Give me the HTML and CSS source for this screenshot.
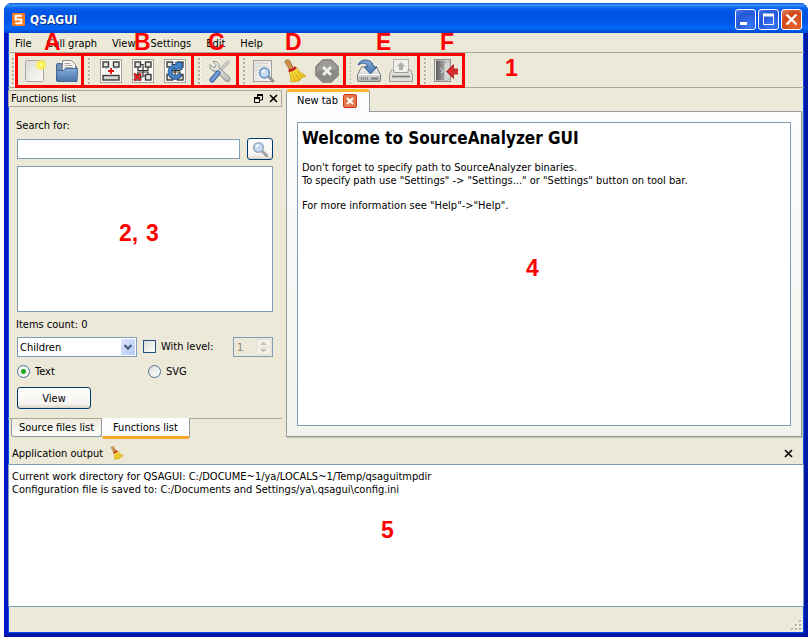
FILE: index.html
```html
<!DOCTYPE html>
<html lang="en">
<head>
<meta charset="utf-8">
<title>QSAGUI</title>
<link rel="stylesheet" href="styles.css">
</head>
<body>
<svg class="defs" aria-hidden="true">
  <defs>
    <linearGradient id="gold" x1="0" y1="0" x2="1" y2="1"><stop offset="0" stop-color="#ffec50"/><stop offset="1" stop-color="#e8b818"/></linearGradient>
    <linearGradient id="steel" x1="0" y1="0" x2="0" y2="1"><stop offset="0" stop-color="#fafafa"/><stop offset="1" stop-color="#b4b6b4"/></linearGradient>
    <linearGradient id="blue" x1="0" y1="0" x2="0" y2="1"><stop offset="0" stop-color="#86aad6"/><stop offset="1" stop-color="#4876ae"/></linearGradient>
    <linearGradient id="page" x1="0" y1="0" x2="1" y2="1"><stop offset="0" stop-color="#dededa"/><stop offset="1" stop-color="#fbfbf9"/></linearGradient>
    <linearGradient id="door" x1="0" y1="0" x2="1" y2="0"><stop offset="0" stop-color="#5c5c5c"/><stop offset="1" stop-color="#c4c4c4"/></linearGradient>
    <radialGradient id="glow"><stop offset="0" stop-color="#ffffb0"/><stop offset=".5" stop-color="#fff23c"/><stop offset="1" stop-color="#ffee30" stop-opacity="0"/></radialGradient>
    <symbol id="broom" viewBox="0 0 24 24">
      <path d="M2.500 1.500q2-1.500 4 0l4 8-3.500 1.500-4.500-7q-1-1.500 0-2.500z" fill="#d09448" stroke="#96602a" stroke-width=".8"/>
      <path d="M6 12l7-4 2 3q3 3 8 6l-4 1.500-3 3.500-3 .5-5 .5q0-6-2-11z" fill="url(#gold)" stroke="#c89810" stroke-width=".7"/>
      <path d="M5.500 11.500q5 0 7-3.500" fill="none" stroke="#c82020" stroke-width="2.600"/>
      <path d="M9 14l3 8M11.500 13l5 8M14 12l5 6" fill="none" stroke="#c89810" stroke-width=".7"/>
    </symbol>
    <symbol id="graph" viewBox="0 0 24 24">
      <rect x="1.500" y=".5" width="21" height="23" fill="#fafaf6" stroke="#a4a49c"/>
      <g fill="#e4e4e0" stroke="#3c3c3c" stroke-width="1.400"><rect x="4" y="3" width="5.500" height="5"/><rect x="14.500" y="3" width="5.500" height="5"/></g>
    </symbol>
    <symbol id="graph4" viewBox="0 0 24 24">
      <use href="#graph"/>
      <path d="M7 8v3.500h10V8M9.500 5.500H12V17h2M7 16v-3h10v3M9.500 18H12" fill="none" stroke="#303030" stroke-width="1.200"/>
      <g fill="#e4e4e0" stroke="#3c3c3c" stroke-width="1.400"><rect x="4" y="15.500" width="5.500" height="5.500"/><rect x="14.500" y="15.500" width="5.500" height="5.500"/></g>
    </symbol>
  </defs>
</svg>

<div class="window">
  <header class="titlebar">
    <svg class="app-logo" viewBox="0 0 14 14" aria-hidden="true"><rect width="14" height="14" rx="1" fill="#f47a20"/><path d="M10.500 3H4v4h6v4H3.500" fill="none" stroke="#fff" stroke-width="2.200"/></svg>
    <h1>QSAGUI</h1>
    <div class="window-buttons">
      <button class="win-button" aria-label="Minimize"><svg viewBox="0 0 21 21"><path d="M5 14.500h7" stroke="#fff" stroke-width="3"/></svg></button>
      <button class="win-button" aria-label="Maximize"><svg viewBox="0 0 21 21"><path d="M5.500 6v9.500h10V6" fill="none" stroke="#fff"/><path d="M5 6h11" stroke="#fff" stroke-width="3"/></svg></button>
      <button class="win-button close" aria-label="Close"><svg viewBox="0 0 21 21"><path d="M5.500 5.500l10 10M15.500 5.500l-10 10" stroke="#fff" stroke-width="2.400"/></svg></button>
    </div>
  </header>

  <nav class="menubar">
    <a href="#">File</a><a href="#">Call graph</a><a href="#">View</a><a href="#">Settings</a><a href="#">Edit</a><a href="#">Help</a>
  </nav>

  <div class="toolbar">
    <span class="handle"></span>
    <div class="groups">
      <div class="group first">
        <button aria-label="New"><svg viewBox="0 0 24 24"><rect x="2.500" y="1.500" width="18" height="21" rx="1" fill="url(#page)" stroke="#a8a8a4"/><path d="M5 3v18" stroke="#c8c8c4" stroke-dasharray="1 3"/><circle cx="18" cy="6" r="6" fill="url(#glow)"/></svg></button>
        <button aria-label="Open"><svg viewBox="0 0 24 24"><path d="M1.500 22V5.500q0-1 1-1h4l1 3h14V15z" fill="#7292b8" stroke="#46658e"/><path d="M7.500 12V1.500h9l4 4V12z" fill="#f4f4f2" stroke="#8c8c8a"/><path d="M9.500 4.500h6M9.500 6.500h8M9.500 8.500h8" stroke="#a8a8a8"/><path d="M2.500 22.500l-1-11h7l2-2h12l-.5 13z" fill="url(#blue)" stroke="#44689a"/></svg></button>
      </div>
      <div class="group">
        <span class="handle"></span>
        <button aria-label="Add graph"><svg viewBox="0 0 24 24"><use href="#graph"/><path d="M9 12h6M12 9v6" stroke="#e01010" stroke-width="1.800"/><path d="M7 8.500v1.500M17 8.500v1.500" stroke="#888"/><rect x="4" y="16.500" width="16" height="4.500" fill="#d4d4d0" stroke="#3c3c3c" stroke-width="1.400"/></svg></button>
        <button aria-label="Remove graph"><svg viewBox="0 0 24 24"><use href="#graph4"/><path d="M3 14.500l7 7M10 14.500l-7 7" stroke="#e01818" stroke-width="2.200"/></svg></button>
        <button aria-label="Refresh graph"><svg viewBox="0 0 24 24"><use href="#graph4"/><path d="M13 7.500A5.500 5.500 0 1 0 17.500 15" fill="none" stroke="#1c4a86" stroke-width="4.600"/><path d="M12 3.500h7v7.500l-2.500-2-3 2.500-2.500-3 3-2.500z" fill="#4484cc" stroke="#1c4a86" stroke-width=".8"/><path d="M14 7.500A5.500 5.500 0 1 0 17 15.500" fill="none" stroke="#4484cc" stroke-width="3"/></svg></button>
      </div>
      <div class="group">
        <span class="handle"></span>
        <button aria-label="Settings"><svg viewBox="0 0 24 24"><path d="M21 2L11 13" stroke="#8c908e" stroke-width="3"/><path d="M21 2L11 13" stroke="#e8eae8" stroke-width="1.400"/><path d="M5 2.500l3 3-.5 2.500-2.500.5-3-3q-1 4 2 6 2 1 4 .5l9 9.500q2 2 4 .5t.5-4L11 9q1-4-2-6-2-1-4-.5z" fill="url(#steel)" stroke="#828684" stroke-width=".9"/><path d="M10 14l-6 7" stroke="#345e98" stroke-width="5" stroke-linecap="round"/><path d="M10 14l-6 7" stroke="#6f9cd4" stroke-width="3.200" stroke-linecap="round"/></svg></button>
      </div>
      <div class="group">
        <span class="handle"></span>
        <button aria-label="Preview"><svg viewBox="0 0 24 24"><rect x="2.500" y="1.500" width="18" height="21" fill="url(#page)" stroke="#a0a09c"/><path d="M5 3v18" stroke="#b8b8b4" stroke-dasharray="1 3"/><path d="M7 4.500h11M7 7.500h11M7 10.500h11M7 13.500h11" stroke="#d4d4d0"/><path d="M18 18l4 4" stroke="#949494" stroke-width="3" stroke-linecap="round"/><circle cx="13.500" cy="14" r="4.800" fill="#c8dcf4" stroke="#6c94c4" stroke-width="1.700"/><path d="M11 13.500q1-2 3-2" fill="none" stroke="#fff" stroke-width="1.400"/></svg></button>
        <button aria-label="Clear"><svg viewBox="0 0 24 24"><use href="#broom"/></svg></button>
        <button aria-label="Stop"><svg viewBox="0 0 24 24"><path d="M7.500 .5h9l7 7v9l-7 7h-9l-7-7v-9z" fill="#8a8a84" stroke="#96968f"/><path d="M8 2h8l6 6v3q-10-1-20 2V8z" fill="#9c9c96"/><path d="M8 8l8 8M16 8l-8 8" stroke="#efefe9" stroke-width="3"/></svg></button>
      </div>
      <div class="group">
        <span class="handle"></span>
        <button aria-label="Save"><svg viewBox="0 0 24 24"><path d="M.500 16l4-8h15l4 8v5q0 1.500-1.500 1.500H2Q.5 22.500.5 21z" fill="url(#steel)" stroke="#777b78"/><path d="M1.500 15.500h21" stroke="#fff"/><path d="M4.500 18v3M6.500 18v3M8.500 18v3M10.500 18v3" stroke="#888"/><path d="M14 19.500h7" stroke="#777" stroke-width="2"/><path d="M1 6q2-5 7-5 8 0 8.500 7H20l-6.500 7L7 8h3.500q-.5-4-3.500-4-3 0-6 2z" fill="url(#blue)" stroke="#2c568c" stroke-width=".9"/></svg></button>
        <button aria-label="Print"><svg viewBox="0 0 24 24"><rect x="4.500" y=".5" width="15" height="14" fill="#f0f0ec" stroke="#b0b0ac"/><path d="M12 3l4.500 4.500H14V11h-4V7.500H7.500z" fill="#b0b0ac"/><path d="M1.500 13q0-2 2-2H5v2.500h14V11h1.500q2 0 2 2l1 3v6.500H.5V16z" fill="#e0e0dc" stroke="#9c9c98"/><path d="M3 17.500h18" stroke="#80807c" stroke-width="1.800"/></svg></button>
      </div>
      <div class="group">
        <span class="handle"></span>
        <button aria-label="Exit"><svg viewBox="0 0 24 24"><rect x=".5" y=".5" width="16" height="22" fill="#eeeeec" stroke="#8a8a88"/><path d="M2 1.500v20h8V5l4-3.500z" fill="url(#door)"/><path d="M10 22.500l6-2v-19L10 5z" fill="#d6d6d4" stroke="#9a9a98" stroke-width=".6"/><path d="M6 9l3 3-2 2" fill="none" stroke="#ddd"/><path d="M12.500 12.500l7-7v4.500h5v5h-5v4.500z" fill="#d42c30" stroke="#a81c20" stroke-width=".8"/></svg></button>
      </div>
    </div>
  </div>

  <main class="workspace">
    <aside class="dock">
      <div class="dock-title">
        <h2>Functions list</h2>
        <button class="plain" aria-label="Float"><svg viewBox="0 0 9 9"><path d="M3 1h6M3.500 1v2M8.500 1v5H6" fill="none" stroke="#000"/><path d="M3 1h6" stroke="#000" stroke-width="2"/><path d="M.500 4v4.500h5V4" fill="none" stroke="#000"/><path d="M0 4h6" stroke="#000" stroke-width="2"/></svg></button>
        <button class="plain" aria-label="Close functions list"><svg viewBox="0 0 9 9"><path d="M1 1l7 7M8 1L1 8" stroke="#000" stroke-width="1.600"/></svg></button>
      </div>
      <form class="dock-body">
        <label for="search">Search for:</label>
        <div class="search-row">
          <input id="search" class="field" type="text">
          <button type="button" class="xp-button find" aria-label="Search"><svg viewBox="0 0 16 16"><path d="M10 10l4.500 4.500" stroke="#a2a2a2" stroke-width="3" stroke-linecap="round"/><circle cx="6.500" cy="6.500" r="4.800" fill="#c4daf2" stroke="#9aacc4" stroke-width="1.600"/><path d="M4 6q1-2 3-2" fill="none" stroke="#fff" stroke-width="1.400"/></svg></button>
        </div>
        <div class="field results"></div>
        <p>Items count: 0</p>
        <div class="options-row">
          <span class="select-box">
            <select class="field" aria-label="Relation"><option>Children</option></select>
            <svg class="drop" viewBox="0 0 14 16" aria-hidden="true"><path d="M3.500 6l3.500 3.500L10.500 6" fill="none" stroke="#4d6185" stroke-width="2.400"/></svg>
          </span>
          <label class="choice"><input type="checkbox">With level:</label>
          <span class="spin">
            <input type="text" aria-label="Level" value="1" disabled>
            <svg viewBox="0 0 15 16" aria-hidden="true"><rect x=".5" y=".5" width="14" height="15" rx="1" fill="#f3f2ea" stroke="#e2e0d2"/><path d="M0 8h15" stroke="#e2e0d2"/><path d="M4 6l3.500-3.500L11 6zM4 10l3.500 3.500L11 10z" fill="#c4c2b4"/></svg>
          </span>
        </div>
        <div class="radio-row">
          <label class="choice"><input type="radio" name="format" checked>Text</label>
          <label class="choice"><input type="radio" name="format">SVG</label>
        </div>
        <button type="button" class="xp-button view">View</button>
      </form>
      <div class="dock-tabs">
        <button class="dock-tab">Source files list</button>
        <button class="dock-tab active">Functions list</button>
      </div>
    </aside>

    <section class="editor">
      <div class="editor-tab">New tab
        <button class="tab-close" aria-label="Close tab"><svg viewBox="0 0 12 12"><path d="M3 3l6 6M9 3L3 9" stroke="#fff" stroke-width="2"/></svg></button>
      </div>
      <div class="editor-pane">
        <article class="page">
          <h2>Welcome to SourceAnalyzer GUI</h2>
          <p>Don't forget to specify path to SourceAnalyzer binaries.<br>To specify path use "Settings" -&gt; "Settings..." or "Settings" button on tool bar.</p>
          <p>For more information see "Help"-&gt;"Help".</p>
        </article>
      </div>
    </section>
  </main>

  <section class="output">
    <div class="output-title">
      <h2>Application output</h2>
      <button class="plain clear" aria-label="Clear output"><svg viewBox="0 0 24 24"><use href="#broom"/></svg></button>
      <button class="plain end" aria-label="Close output"><svg viewBox="0 0 9 9"><path d="M1 1l7 7M8 1L1 8" stroke="#000" stroke-width="1.600"/></svg></button>
    </div>
    <div class="log">
      <p>Current work directory for QSAGUI: C:/DOCUME~1/ya/LOCALS~1/Temp/qsaguitmpdir</p>
      <p>Configuration file is saved to: C:/Documents and Settings/ya\.qsagui\config.ini</p>
    </div>
  </section>

  <footer class="statusbar">
    <svg viewBox="0 0 12 12" aria-hidden="true"><path d="M9 1h2v2H9zM5 5h2v2H5zM9 5h2v2H9zM1 9h2v2H1zM5 9h2v2H5zM9 9h2v2H9z" fill="#fff"/><path d="M8 0h2v2H8zM4 4h2v2H4zM8 4h2v2H8zM0 8h2v2H0zM4 8h2v2H4zM8 8h2v2H8z" fill="#b8b4a2"/></svg>
  </footer>

  <span class="callout a">A</span><span class="callout b">B</span><span class="callout c">C</span><span class="callout d">D</span><span class="callout e">E</span><span class="callout f">F</span>
  <span class="callout n1">1</span><span class="callout n2">2,</span><span class="callout n3">3</span><span class="callout n4">4</span><span class="callout n5">5</span>
</div>
</body>
</html>
```
FILE: styles.css
```css
* { box-sizing: border-box; }

body {
  margin: 0;
  padding: 3px 3px 3px 4px;
  background: #fff;
  color: #000;
  font: 11px/13px "DejaVu Sans Condensed", "Noto Sans", sans-serif;
}

h1, h2, p { margin: 0; font-size: 11px; font-weight: normal; }
a { color: inherit; text-decoration: none; }
button, input, select { font: inherit; color: inherit; margin: 0; padding: 0; }
button { border: 0; background: none; }
svg { display: block; }
.defs { position: absolute; width: 0; height: 0; }

.window {
  position: relative;
  display: flex;
  flex-direction: column;
  min-height: calc(100vh - 6px);
  border: 4px solid #0831d9;
  border-top: 0;
  border-color: #0842e0 #0018a8 #0018a8 #0018c8;
  border-radius: 8px 8px 0 0;
  background: #ece9d8;
  box-shadow: inset 0 0 0 1px #0050e8;
}

/* Title bar */
.titlebar {
  display: flex;
  align-items: center;
  height: 30px;
  margin: 0 -4px;
  padding: 3px 6px 0 8px;
  border-radius: 8px 8px 0 0;
  background: linear-gradient(#0a4fd0, #3c96ff 2px, #0a62ee 5px, #0054e3 10px, #0055e5 18px, #0266fa 25px, #0048cc 30px);
}
.app-logo { width: 13px; height: 13px; }
.titlebar h1 {
  margin-left: 5px;
  color: #fff;
  font: bold 12px/16px "DejaVu Sans Condensed", sans-serif;
  text-shadow: 1px 1px #0a2a80;
}
.window-buttons { display: flex; gap: 2px; margin-left: auto; }
.win-button {
  width: 21px;
  height: 21px;
  border: 1px solid #fff;
  border-radius: 3px;
  background: radial-gradient(circle at 70% 80%, #3a78f4, #2458d8 60%, #4a78e4);
}
.win-button svg { width: 21px; height: 21px; margin: -1px; }
.win-button.close { background: radial-gradient(circle at 70% 80%, #e8602c, #d04818 60%, #e88468); }

/* Menu */
.menubar {
  display: flex;
  gap: 15px;
  height: 20px;
  padding: 4px 7px;
  border-bottom: 1px solid #aca899;
}

/* Tool bar */
.toolbar {
  display: flex;
  height: 35px;
  padding-left: 4px;
  border-bottom: 1px solid #aca899;
}
.handle {
  width: 3px;
  height: 26px;
  margin-top: 5px;
  background:
    linear-gradient(#b4b0a2, #b4b0a2) 0 0 / 2px 100%,
    #fff;
  mask: repeating-linear-gradient(#000 0 2px, transparent 2px 4px);
}
.groups {
  display: grid;
  grid-template-columns: 69px 110px 45px 107px 74px 45px;
  height: 35px;
}
.group {
  display: flex;
  justify-content: flex-end;
  align-items: center;
  gap: 4px;
  padding: 0 2px;
  border: solid #f00;
  border-width: 3px 3px 3px 0;
}
.group.first { padding: 0; border-left-width: 3px; }
.group .handle { margin: 0 auto 0 2px; background-repeat: no-repeat; }
.handle { background-repeat: no-repeat; }
.group button { width: 28px; height: 28px; padding: 2px; }
.group svg { width: 24px; height: 24px; }

/* Workspace */
.workspace {
  flex: 1;
  display: grid;
  grid-template-columns: 274px 1fr;
  gap: 4px;
  padding: 2px 2px 0 0;
}

.dock { display: flex; flex-direction: column; }
.dock-title {
  display: flex;
  align-items: center;
  gap: 6px;
  height: 17px;
  padding: 0 3px 0 2px;
  border: 1px solid #aca899;
}
.dock-title h2 { flex: 1; }
.plain svg { width: 9px; height: 9px; }

.dock-body {
  flex: 1;
  display: flex;
  flex-direction: column;
  gap: 6px;
  padding: 12px 9px 9px;
}
.dock-body > label, .dock-body > p { margin-left: -1px; }
.field {
  border: 1px solid #7f9db9;
  border-radius: 0;
  background: #fff;
}
.search-row { display: flex; align-items: center; gap: 7px; }
.search-row .field { flex: 1; min-width: 0; height: 20px; }
.xp-button {
  border: 1px solid #003c74;
  border-radius: 3px;
  background: linear-gradient(#fff, #f4f3ee 80%, #d8d2c4);
}
.find { width: 26px; height: 22px; padding: 2px 4px; }
.find svg { width: 16px; height: 16px; }
.results { flex: 1; min-height: 60px; }

.options-row { display: flex; align-items: flex-start; height: 22px; }
.select-box { position: relative; width: 120px; }
.select-box select {
  appearance: none;
  display: block;
  width: 100%;
  height: 20px;
  padding: 0 2px;
}
.drop {
  position: absolute;
  top: 2px;
  right: 2px;
  width: 14px;
  height: 16px;
  border-radius: 1px;
  background: linear-gradient(135deg, #dce6fe, #b4c8f4);
  pointer-events: none;
}
.options-row .choice { margin: 3px 0 0 6px; }
.choice { display: flex; align-items: center; gap: 5px; height: 13px; }
.choice input {
  appearance: none;
  width: 13px;
  height: 13px;
  border: 1px solid #1c5180;
  background: linear-gradient(135deg, #dcdcd7, #fff);
}
.choice input[type="radio"] { border-color: #4a7294; border-radius: 50%; }
.choice input[type="radio"]:checked { background: radial-gradient(circle, #20a820 2px, #f4f4f0 3px); }
.spin {
  display: flex;
  align-items: center;
  width: 40px;
  height: 20px;
  margin-left: auto;
  padding: 0 1px 0 3px;
  border: 1px solid #7f9db9;
}
.spin input { flex: 1; min-width: 0; width: 0; border: 0; background: none; color: #888578; }
.spin svg { width: 15px; height: 16px; }
.radio-row { display: grid; grid-template-columns: 131px 1fr; height: 16px; }
.view { width: 74px; height: 22px; }

.dock-tabs {
  display: flex;
  align-items: flex-start;
  height: 21px;
  padding-left: 3px;
  border-top: 1px solid #aca899;
}
.dock-tab {
  height: 18px;
  padding: 0 7px;
  border: 1px solid #919b9c;
  border-top: 0;
  border-radius: 0 0 3px 3px;
  background: linear-gradient(#eeebdf, #fcfcfa);
}
.dock-tab.active {
  height: 21px;
  margin-top: -1px;
  padding: 0 11px;
  border-left: 0;
  border-bottom: 3px solid #f8a430;
  background: #fcfcfe;
}

.editor { display: flex; flex-direction: column; padding-bottom: 2px; }
.editor-tab {
  position: relative;
  display: flex;
  align-items: center;
  gap: 5px;
  align-self: flex-start;
  height: 23px;
  margin: -1px 0 -1px;
  padding: 0 12px 3px 10px;
  border: 1px solid #919b9c;
  border-top: 3px solid #fcb830;
  border-bottom: 0;
  border-radius: 3px 3px 0 0;
  background: #fcfcfe;
}
.tab-close {
  width: 14px;
  height: 14px;
  border: 1px solid #d03818;
  border-radius: 2px;
  background: #e4784c;
}
.tab-close svg { width: 12px; height: 12px; }
.editor-pane {
  flex: 1;
  display: flex;
  padding: 10px;
  border: 1px solid #919b9c;
  background: linear-gradient(#fcfcfe, #f3f2ec);
  box-shadow: 1px 1px 1px #c8c4b0;
}
.page { flex: 1; padding: 6px 4px; border: 1px solid #7f9db9; background: #fff; }
.page h2 { margin-bottom: 13px; font: bold 17px/19px "DejaVu Sans Condensed", sans-serif; }
.page p { margin-bottom: 12px; }

/* Output */
.output-title {
  display: flex;
  align-items: center;
  gap: 7px;
  height: 25px;
  padding: 3px 11px 0 4px;
}
.clear svg { width: 14px; height: 14px; }
.end { margin-left: auto; }
.log {
  min-height: 143px;
  padding: 5px 3px;
  border: 1px solid #7f9db9;
  background: #fff;
}
.statusbar { display: flex; justify-content: flex-end; align-items: flex-end; height: 26px; padding: 1px; }
.statusbar svg { width: 12px; height: 12px; }

/* Callouts lie over the window */
.callout {
  position: absolute;
  color: #f00;
  font: bold 23px/24px "Liberation Sans", sans-serif;
  pointer-events: none;
}
.a { left: 36px; top: 27px; }
.b { left: 126px; top: 27px; }
.c { left: 200px; top: 27px; }
.d { left: 277px; top: 27px; }
.e { left: 368px; top: 27px; }
.f { left: 432px; top: 27px; }
.n1 { left: 497px; top: 53px; }
.n2 { left: 111px; top: 218px; }
.n3 { left: 138px; top: 218px; }
.n4 { left: 518px; top: 253px; }
.n5 { left: 373px; top: 515px; }
```
